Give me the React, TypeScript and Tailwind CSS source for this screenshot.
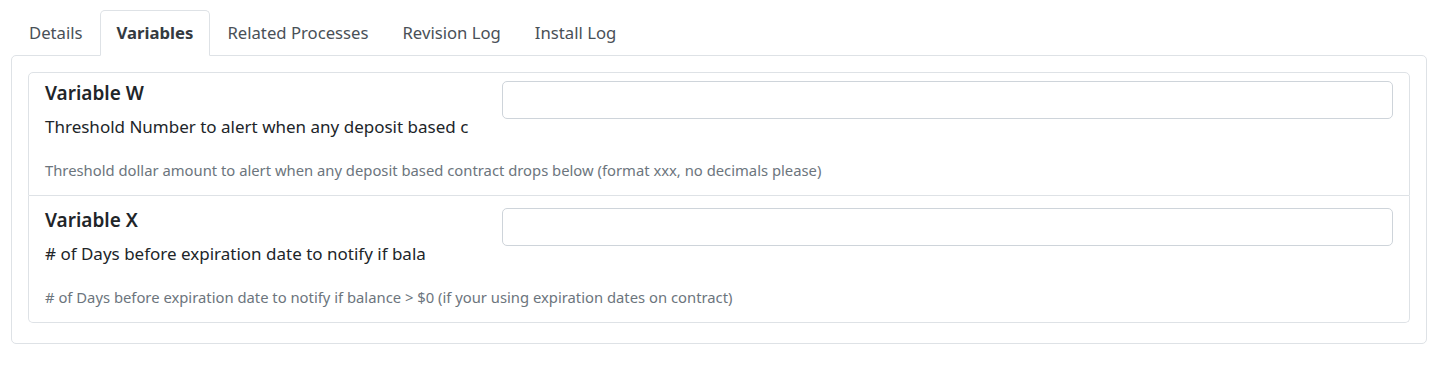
import { useState } from "react"

const tabs = ["Details", "Variables", "Related Processes", "Revision Log", "Install Log"]

const variables = [
    {
        name: "Variable W",
        label: "Threshold Number to alert when any deposit based c",
        help: "Threshold dollar amount to alert when any deposit based contract drops below (format xxx, no decimals please)",
    },
    {
        name: "Variable X",
        label: "# of Days before expiration date to notify if bala",
        help: "# of Days before expiration date to notify if balance > $0 (if your using expiration dates on contract)",
    },
]

export default function App() {
    const [active, setActive] = useState("Variables")

    return (
        <div className="min-h-screen bg-white pt-[10px] px-[11px] text-[#212529] font-['Noto_Sans',sans-serif]">
            <div className="flex w-[1416px] pl-px">
                {tabs.map((t) => (
                    <button
                        key={t}
                        onClick={() => setActive(t)}
                        className={
                            t === active
                                ? "relative -mb-px h-[46px] px-4 border border-[#dee2e6] border-b-white rounded-t-[5px] bg-white text-[16.7px] font-bold text-[#343a40]"
                                : "h-[45px] px-4 border border-transparent text-[16.7px] text-[#495057]"
                        }
                    >
                        {t}
                    </button>
                ))}
            </div>
            <div className="w-[1416px] border border-[#dee2e6] rounded-b-[5px] rounded-tl-[5px] rounded-tr-[5px] p-4 pb-5">
                <div className="flex flex-col">
                    {variables.map((v, i) => (
                        <div
                            key={v.name}
                            className={
                                i === 0
                                    ? "flex border border-[#dee2e6] rounded-t-[5px] px-4 pt-2 h-[124px]"
                                    : "flex border border-t-0 border-[#dee2e6] rounded-b-[5px] px-4 pt-3 h-[127px]"
                            }
                        >
                            <div className="w-[457px] shrink-0 flex flex-col">
                                <div className="text-[19px] font-semibold leading-6 whitespace-nowrap">{v.name}</div>
                                <div className="mt-[10px] text-[17px] leading-6 whitespace-nowrap">{v.label}</div>
                                <div className="mt-[21px] text-[14.8px] leading-5 text-[#6c757d] whitespace-nowrap">{v.help}</div>
                            </div>
                            <div className="flex-1">
                                <input
                                    type="text"
                                    className="w-full h-[38px] border border-[#ced4da] rounded-[5px] px-3 outline-none"
                                />
                            </div>
                        </div>
                    ))}
                </div>
            </div>
        </div>
    )
}
